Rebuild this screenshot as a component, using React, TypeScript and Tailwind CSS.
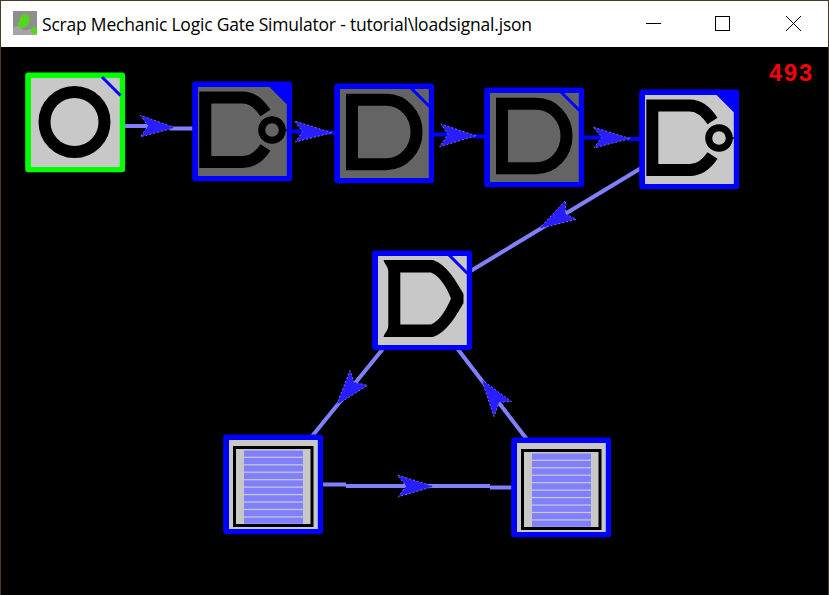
import React from "react";

type Kind = "switch" | "nand" | "and" | "or" | "timer";

interface GateNode {
  kind: Kind;
  place: string;
  on: boolean;
}

const gates: GateNode[] = [
  { kind: "switch", place: "left-[25px] top-[72px]", on: true },
  { kind: "nand", place: "left-[192px] top-[81px]", on: false },
  { kind: "and", place: "left-[334px] top-[83px]", on: false },
  { kind: "and", place: "left-[484px] top-[87px]", on: false },
  { kind: "nand", place: "left-[639px] top-[89px]", on: true },
  { kind: "or", place: "left-[372px] top-[250px]", on: true },
  { kind: "timer", place: "left-[223px] top-[434px]", on: true },
  { kind: "timer", place: "left-[511px] top-[437px]", on: true },
];

function Symbol({ kind }: { kind: Kind }) {
  if (kind === "switch") {
    return <circle cx="49.5" cy="50" r="30" fill="none" stroke="#000" strokeWidth="12" />;
  }
  if (kind === "and") {
    return <path d="M18 16.8H52.5A30 32.2 0 0 1 52.5 81.2H18Z" fill="none" stroke="#000" strokeWidth="12" />;
  }
  if (kind === "nand") {
    return (
      <>
        <path d="M73.5 32C66.5 21.5 59.5 16.5 51 16.5H13.3V81H51C59.5 81 66.5 77 73.5 66.5" fill="none" stroke="#000" strokeWidth="12" />
        <circle cx="80" cy="49" r="10.3" fill="none" stroke="#000" strokeWidth="7" />
        <path d="M92 49h3" stroke="#000" strokeWidth="1.5" />
      </>
    );
  }
  if (kind === "or") {
    return (
      <path
        fillRule="evenodd"
        d="M11.5 10H61C75 15 84 31 91.5 44V53C84 66 75 82 61 87H11.5C13 82 16.3 81 16.3 75V22C16.3 16 13 15 11.5 10ZM28.3 22.5V74.5H59C68 71 75 58 79 48.5C75 38 68 26 59 22.5Z"
      />
    );
  }
  return (
    <>
      <rect x="11.5" y="13.5" width="77.5" height="78" fill="none" stroke="#000" strokeWidth="3" />
      {Array.from({ length: 10 }, (_, i) => (
        <rect key={i} x="21" y={16.5 + i * 7.45} width="59" height="6.2" fill="#8080ff" />
      ))}
    </>
  );
}

function Gate({ kind, place, on }: GateNode) {
  return (
    <div className={`absolute ${place} h-[101px] w-[101px]`}>
      <svg width="101" height="101" viewBox="0 0 101 101" className="block">
        <rect x="0.2" y="0.4" width="99.9" height="99.9" rx="3" fill={kind === "switch" ? "#00ff00" : "#0000ff"} />
        <rect x="6" y="6" width="88.8" height="89" fill={on ? "#c8c8c8" : "#646464"} />
        {kind === "nand" && <path d="M77.5 6H95V23.5Z" fill="#0000ff" />}
        {(kind === "switch" || kind === "and" || kind === "or") && (
          <path d="M77 5L95.5 23.5" stroke="#0000ff" strokeWidth="3" />
        )}
        <Symbol kind={kind} />
      </svg>
    </div>
  );
}

const wires = [
  { d: "M124 126H148M170 128.5H194", lit: true },
  { d: "M290 131.5H314L336 133", lit: false },
  { d: "M432 134.5H452M472 136.5H487", lit: false },
  { d: "M582 137.5H605M627 139H642", lit: false },
  { d: "M642 167.5L469 272", lit: true },
  { d: "M384 347.5L311 437.5", lit: true },
  { d: "M322 484.5H346M346 486H490M490 487.5H514", lit: true },
  { d: "M456.5 347.5L527 439.5", lit: true },
];

const arrows = [
  "175,127.7 140.5,115.3 148,126 140.5,136.8",
  "332,132.7 294.5,121 302.5,131.5 295.5,142",
  "476,135.8 441,124 448,134.5 439.5,146.8",
  "630,138.5 593,127 602,137 594,148",
  "539,228.7 565.5,200.5 565.5,213.5 576,219.5",
  "336.5,405 350,370.5 354,382 367.5,385.5",
  "434,486.4 397.5,475 406,486 398.5,496.7",
  "481.5,379.5 511.5,401.5 499,402.5 494,416.5",
];

export default function App() {
  return (
    <div className="flex h-[595px] w-[829px] flex-col overflow-hidden border-x border-t border-[#4a3828] bg-black">
      <header className="flex h-[46px] shrink-0 items-center bg-white pl-3">
        <svg width="24" height="24" viewBox="0 0 24 24" className="relative -top-px shrink-0">
          <rect width="24" height="24" fill="#8e8e8e" />
          <path d="M0 17Q5 13 8 17T17 18L24 22V24H0Z" fill="#a5a5a5" />
          <path d="M9 4Q15 1 16 6Q18 11 14 15Q11 18 6 16Q3 14 6 11Q7 6 9 4Z" fill="#55d51b" />
          <path d="M18 18Q21 15 24 17V23Q19 24 18 20Z" fill="#55d51b" />
        </svg>
        <h1 className="ml-[5px] whitespace-pre pb-px font-['Open_Sans','Noto_Sans',sans-serif] text-[17.5px] font-normal leading-[24px] tracking-[-0.21px] text-black">
          Scrap Mechanic Logic Gate Simulator - tutorial\loadsignal.json
        </h1>
        <div className="ml-auto flex items-center pb-px pr-[27px]">
          <svg width="15" height="15" viewBox="0 0 15 15" shapeRendering="crispEdges" className="mr-[54px]">
            <path d="M0 7.5H15" stroke="#000" />
          </svg>
          <svg width="15" height="15" viewBox="0 0 15 15" shapeRendering="crispEdges" className="mr-14">
            <path d="M.5 .5H14.5V14.5H.5Z" fill="none" stroke="#000" />
          </svg>
          <svg width="15" height="15" viewBox="0 0 15 15">
            <path d="M0 0L15 15M15 0L0 15" stroke="#000" />
          </svg>
        </div>
      </header>
      <main className="relative grow">
        <div className="absolute -left-px -top-[47px] h-[595px] w-[829px]">
          <svg width="829" height="595" viewBox="0 0 829 595" className="absolute inset-0">
            {wires.map((w) => (
              <path key={w.d} d={w.d} stroke={w.lit ? "#8080ff" : "#0000ff"} strokeWidth="4" fill="none" />
            ))}
            {arrows.map((points) => (
              <g key={points}>
                <polygon points={points} fill="#281eff" />
                <polygon points={points} fill="none" stroke="#8c86ff" strokeWidth="0.8" strokeDasharray="2 2" />
              </g>
            ))}
          </svg>
          {gates.map((g) => (
            <Gate key={g.place} {...g} />
          ))}
          <span className="absolute left-[769px] top-[60px] font-['Liberation_Sans',sans-serif] text-[23.5px] font-bold leading-[26px] tracking-[1.9px] text-[#fa0000]">
            493
          </span>
        </div>
      </main>
    </div>
  );
}
